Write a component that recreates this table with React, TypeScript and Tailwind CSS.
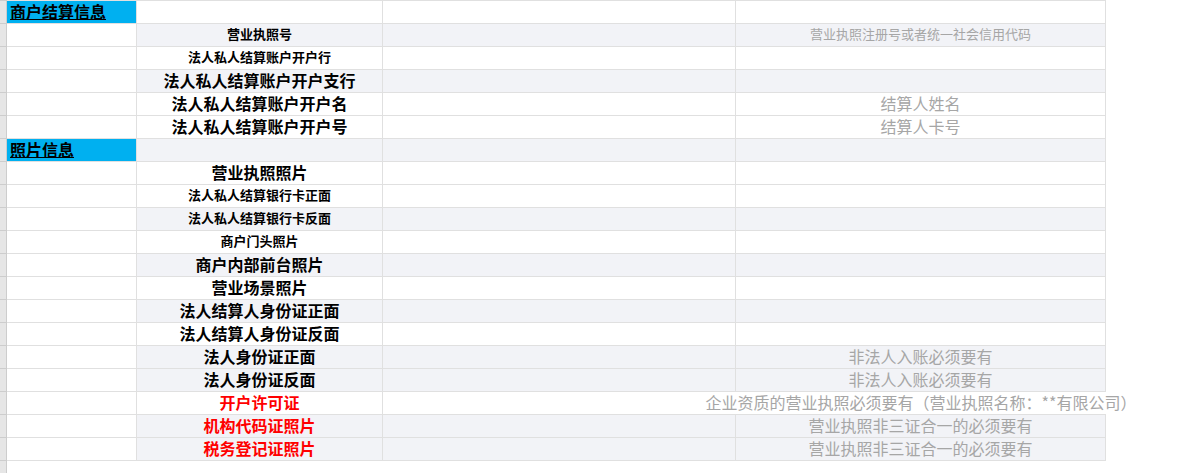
import React from "react"

type Row = {
  label: string
  section?: boolean
  size?: 13 | 16
  gray?: boolean
  red?: boolean
  note?: string
  noteSize?: 13 | 16
  overflow?: boolean
}

const rows: Row[] = [
  { label: "商户结算信息", section: true },
  { label: "营业执照号", size: 13, gray: true, note: "营业执照注册号或者统一社会信用代码", noteSize: 13 },
  { label: "法人私人结算账户开户行", size: 13 },
  { label: "法人私人结算账户开户支行", size: 16, gray: true },
  { label: "法人私人结算账户开户名", size: 16, note: "结算人姓名", noteSize: 16 },
  { label: "法人私人结算账户开户号", size: 16, note: "结算人卡号", noteSize: 16 },
  { label: "照片信息", section: true, gray: true },
  { label: "营业执照照片", size: 16 },
  { label: "法人私人结算银行卡正面", size: 13 },
  { label: "法人私人结算银行卡反面", size: 13, gray: true },
  { label: "商户门头照片", size: 13 },
  { label: "商户内部前台照片", size: 16, gray: true },
  { label: "营业场景照片", size: 16 },
  { label: "法人结算人身份证正面", size: 16, gray: true },
  { label: "法人结算人身份证反面", size: 16 },
  { label: "法人身份证正面", size: 16, gray: true, note: "非法人入账必须要有", noteSize: 16 },
  { label: "法人身份证反面", size: 16, gray: true, note: "非法人入账必须要有", noteSize: 16 },
  {
    label: "开户许可证",
    size: 16,
    red: true,
    note: "企业资质的营业执照必须要有（营业执照名称：**有限公司）",
    noteSize: 16,
    overflow: true,
  },
  { label: "机构代码证照片", size: 16, gray: true, red: true, note: "营业执照非三证合一的必须要有", noteSize: 16 },
  { label: "税务登记证照片", size: 16, gray: true, red: true, note: "营业执照非三证合一的必须要有", noteSize: 16 },
]

function SheetRow({ row }: { row: Row }) {
  const bg = row.gray ? "bg-[#f2f3f7]" : "bg-white"
  return (
    <div className="flex h-[23px]">
      <div className="w-[7px] shrink-0 border-b border-r border-[#cdcdcd] bg-[#e6e6e6]" />
      {row.section ? (
        <div className="w-[130px] shrink-0 border-b border-r border-[#e0e0e0] bg-[#00b0f0] pl-[3px] text-[16px] font-bold leading-[20px] text-black underline decoration-1 underline-offset-1">
          {row.label}
        </div>
      ) : (
        <div className="w-[130px] shrink-0 border-b border-r border-[#e0e0e0] bg-white" />
      )}
      <div
        className={`flex w-[246px] shrink-0 items-center justify-center border-b border-r border-[#e0e0e0] pb-[2px] ${bg} whitespace-nowrap font-bold leading-[20px] ${
          row.size === 13 ? "text-[13px]" : "text-[16px]"
        } ${row.red ? "text-[#ff0000]" : "text-black"}`}
      >
        {row.section ? "" : row.label}
      </div>
      <div
        className={`w-[353px] shrink-0 border-b border-[#e0e0e0] ${row.overflow ? "bg-white" : `${bg} border-r`}`}
      />
      <div
        className={`flex w-[370px] shrink-0 items-center justify-center overflow-visible whitespace-nowrap border-b border-[#e0e0e0] pb-[2px] leading-[20px] text-[#a6a6a6] ${
          row.overflow ? "bg-transparent" : `${bg} border-r`
        } ${row.noteSize === 13 ? "text-[13px]" : "text-[16px]"}`}
      >
        {row.note}
      </div>
    </div>
  )
}

export default function App() {
  return (
    <div
      className="flex h-[473px] w-[1177px] flex-col overflow-hidden bg-white"
      style={{ fontFamily: '"Noto Sans CJK SC", "Noto Sans", sans-serif' }}
    >
      <div className="flex h-px shrink-0">
        <div className="w-[7px] bg-[#cdcdcd]" />
        <div className="w-[1099px] bg-[#e0e0e0]" />
      </div>
      {rows.map((row, i) => (
        <SheetRow key={i} row={row} />
      ))}
      <div className="w-[7px] flex-1 border-r border-[#cdcdcd] bg-[#e6e6e6]" />
    </div>
  )
}
